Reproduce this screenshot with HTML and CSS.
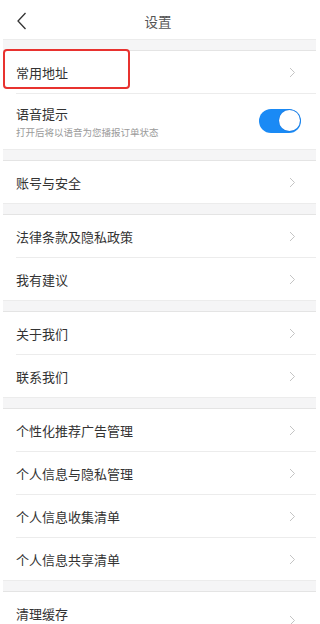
FILE: index.html
```html
<!DOCTYPE html>
<html lang="zh-CN">
<head>
<meta charset="utf-8">
<title>设置</title>
<link rel="stylesheet" href="styles.css">
</head>
<body>
<div class="page">
  <header class="topbar">
    <svg class="back" width="12" height="20" viewBox="0 0 12 20"><polyline points="9.5,2 2,10 9.5,18" fill="none" stroke="#333" stroke-width="1.3"/></svg>
    <div class="title">设置</div>
  </header>

  <div class="gap"></div>
  <div class="group">
    <div class="row marked">
      <span class="label">常用地址</span>
      <svg class="chev" width="7" height="11" viewBox="0 0 7 11"><polyline points="1,1 5.5,5.5 1,10" fill="none" stroke="#c4c4c4" stroke-width="1"/></svg>
      <div class="mark"></div>
    </div>
    <div class="row tall">
      <div class="texts">
        <span class="label">语音提示</span>
        <span class="sub">打开后将以语音为您播报订单状态</span>
      </div>
      <div class="toggle"><div class="knob"></div></div>
    </div>
  </div>

  <div class="gap"></div>
  <div class="group">
    <div class="row"><span class="label">账号与安全</span><svg class="chev" width="7" height="11" viewBox="0 0 7 11"><polyline points="1,1 5.5,5.5 1,10" fill="none" stroke="#c4c4c4" stroke-width="1"/></svg></div>
  </div>

  <div class="gap"></div>
  <div class="group">
    <div class="row"><span class="label">法律条款及隐私政策</span><svg class="chev" width="7" height="11" viewBox="0 0 7 11"><polyline points="1,1 5.5,5.5 1,10" fill="none" stroke="#c4c4c4" stroke-width="1"/></svg></div>
    <div class="row"><span class="label">我有建议</span><svg class="chev" width="7" height="11" viewBox="0 0 7 11"><polyline points="1,1 5.5,5.5 1,10" fill="none" stroke="#c4c4c4" stroke-width="1"/></svg></div>
  </div>

  <div class="gap"></div>
  <div class="group">
    <div class="row"><span class="label">关于我们</span><svg class="chev" width="7" height="11" viewBox="0 0 7 11"><polyline points="1,1 5.5,5.5 1,10" fill="none" stroke="#c4c4c4" stroke-width="1"/></svg></div>
    <div class="row"><span class="label">联系我们</span><svg class="chev" width="7" height="11" viewBox="0 0 7 11"><polyline points="1,1 5.5,5.5 1,10" fill="none" stroke="#c4c4c4" stroke-width="1"/></svg></div>
  </div>

  <div class="gap"></div>
  <div class="group">
    <div class="row"><span class="label">个性化推荐广告管理</span><svg class="chev" width="7" height="11" viewBox="0 0 7 11"><polyline points="1,1 5.5,5.5 1,10" fill="none" stroke="#c4c4c4" stroke-width="1"/></svg></div>
    <div class="row"><span class="label">个人信息与隐私管理</span><svg class="chev" width="7" height="11" viewBox="0 0 7 11"><polyline points="1,1 5.5,5.5 1,10" fill="none" stroke="#c4c4c4" stroke-width="1"/></svg></div>
    <div class="row"><span class="label">个人信息收集清单</span><svg class="chev" width="7" height="11" viewBox="0 0 7 11"><polyline points="1,1 5.5,5.5 1,10" fill="none" stroke="#c4c4c4" stroke-width="1"/></svg></div>
    <div class="row"><span class="label">个人信息共享清单</span><svg class="chev" width="7" height="11" viewBox="0 0 7 11"><polyline points="1,1 5.5,5.5 1,10" fill="none" stroke="#c4c4c4" stroke-width="1"/></svg></div>
  </div>

  <div class="gap"></div>
  <div class="group">
    <div class="row cache"><span class="label">清理缓存</span><svg class="chev" width="7" height="11" viewBox="0 0 7 11"><polyline points="1,1 5.5,5.5 1,10" fill="none" stroke="#c4c4c4" stroke-width="1"/></svg></div>
  </div>
</div>
</body>
</html>
```

FILE: styles.css
```css
html, body {
  margin: 0;
  padding: 0;
  background: #ffffff;
}
body {
  font-family: "Noto Sans CJK SC", "Noto Sans", sans-serif;
  color: #333333;
  overflow: hidden;
}
.page {
  width: 316px;
  height: 624px;
  overflow: hidden;
  display: flex;
  flex-direction: column;
}
.topbar {
  position: relative;
  height: 39px;
  flex: none;
  display: flex;
  align-items: center;
  justify-content: center;
}
.back {
  position: absolute;
  left: 16px;
  top: 11px;
}
.title {
  font-size: 13.5px;
  color: #555555;
  line-height: 1;
  margin-top: 4px;
}
.gap {
  flex: none;
  height: 10px;
  margin-left: 3px;
  background: #f5f5f6;
  border-top: 1px solid #ececec;
  border-bottom: 1px solid #e4e4e4;
}
.group {
  flex: none;
  display: flex;
  flex-direction: column;
}
.row {
  position: relative;
  height: 42px;
  margin-left: 16px;
  padding-right: 20px;
  display: flex;
  align-items: center;
  justify-content: space-between;
  border-bottom: 1px solid #ececec;
}
.row:last-child {
  border-bottom: none;
}
.label {
  font-size: 13px;
  color: #333333;
  line-height: 1;
}
.chev {
  display: block;
}
.tall {
  height: 55px;
  padding-right: 15px;
}
.texts {
  display: flex;
  flex-direction: column;
  gap: 8px;
  margin-top: 1px;
}
.sub {
  font-size: 9.5px;
  color: #9a9a9a;
  line-height: 1;
}
.toggle {
  width: 42px;
  height: 24px;
  border-radius: 12px;
  background: #1a8af5;
  display: flex;
  align-items: center;
  justify-content: flex-end;
  padding: 0 1px;
  box-sizing: border-box;
  margin-top: -2px;
}
.knob {
  width: 21px;
  height: 21px;
  border-radius: 50%;
  background: #ffffff;
  box-shadow: 0 0 0 0.5px #1a7ae0;
}
.mark {
  position: absolute;
  left: -13px;
  top: -2px;
  width: 127px;
  height: 40px;
  box-sizing: border-box;
  border: 2px solid #e8322f;
  border-radius: 4px;
}
.cache {
  height: 56px;
  align-items: flex-start;
}
.cache .label {
  margin-top: 15px;
}
.cache .chev {
  margin-top: 23px;
}
```
